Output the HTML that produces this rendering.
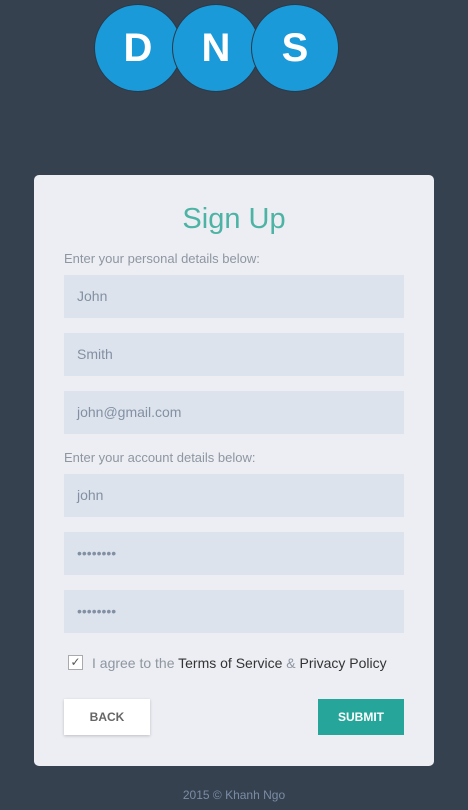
<!DOCTYPE html><html><head><style>
body{margin:0;width:468px;height:810px;background:#364150;font-family:"Liberation Sans",sans-serif;position:relative;overflow:hidden}
.c{position:absolute;width:86px;height:86px;border-radius:50%;background:#1a9ad9;top:5px;color:#fff;font-weight:bold;font-size:40px;line-height:86px;text-align:center;box-shadow:0 0 0 1px #2a3a4a}
.card{position:absolute;left:34px;top:175px;width:400px;height:591px;background:#eceef3;border-radius:5px}
h1{position:absolute;top:203px;left:0;width:468px;text-align:center;margin:0;font-weight:normal;font-size:29px;color:#4db3a4}
.l{position:absolute;left:64px;font-size:13px;color:#8e96a1}
.i{position:absolute;left:64px;width:340px;height:43px;background:#dde3ec;color:#8290a3;font-size:14px;line-height:43px;box-sizing:border-box;padding-left:13px}
</style></head><body>
<div class="c" style="left:95px">D</div><div class="c" style="left:173px">N</div><div class="c" style="left:252px">S</div>
<div class="card"></div>
<h1>Sign Up</h1>
<div class="l" style="top:251px">Enter your personal details below:</div>
<div class="i" style="top:275px">John</div>
<div class="i" style="top:333px">Smith</div>
<div class="i" style="top:391px">john@gmail.com</div>
<div class="l" style="top:450px">Enter your account details below:</div>
<div class="i" style="top:474px">john</div>
<div class="i" style="top:532px">••••••••</div>
<div class="i" style="top:590px">••••••••</div>
<div style="position:absolute;left:68px;top:655px;width:15px;height:15px;border:1px solid #aaa;background:#fff;box-sizing:border-box;font-size:12px;line-height:13px;text-align:center;color:#555">✓</div>
<div style="position:absolute;left:92px;top:655px;font-size:14px;color:#8e96a1">I agree to the <span style="color:#333">Terms of Service</span> &amp; <span style="color:#333">Privacy Policy</span></div>
<div style="position:absolute;left:64px;top:699px;width:86px;height:36px;background:#fff;box-shadow:0 1px 3px rgba(0,0,0,.2);text-align:center;line-height:36px;font-weight:bold;font-size:12px;color:#666">BACK</div>
<div style="position:absolute;left:318px;top:699px;width:86px;height:36px;background:#26a69a;text-align:center;line-height:36px;font-weight:bold;font-size:12px;color:#fff">SUBMIT</div>
<div style="position:absolute;top:788px;width:468px;text-align:center;font-size:12px;color:#7a8ca5">2015 © Khanh Ngo</div>
</body></html>
